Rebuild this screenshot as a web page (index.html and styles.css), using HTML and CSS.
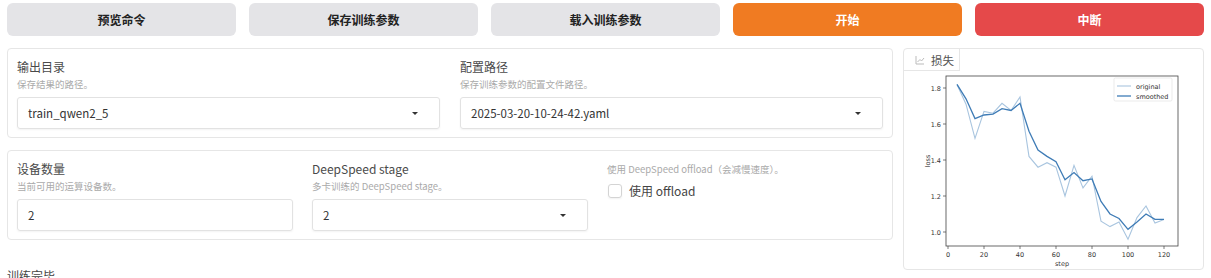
FILE: index.html
```html
<!DOCTYPE html>
<html lang="zh">
<head>
    <meta charset="UTF-8">
    <title>训练</title>
    <link rel="stylesheet" href="styles.css">
</head>
<body>
<div class="btn-row">
    <button class="btn">预览命令</button>
    <button class="btn">保存训练参数</button>
    <button class="btn">载入训练参数</button>
    <button class="btn btn-start">开始</button>
    <button class="btn btn-stop">中断</button>
</div>
<div class="main-row">
    <div class="left-col">
        <div class="panel cols-2">
            <div class="field">
                <div class="label">输出目录</div>
                <div class="desc">保存结果的路径。</div>
                <div class="input select">train_qwen2_5<span class="caret"></span></div>
            </div>
            <div class="field">
                <div class="label">配置路径</div>
                <div class="desc">保存训练参数的配置文件路径。</div>
                <div class="input select">2025-03-20-10-24-42.yaml<span class="caret"></span></div>
            </div>
        </div>
        <div class="panel cols-3">
            <div class="field">
                <div class="label">设备数量</div>
                <div class="desc">当前可用的运算设备数。</div>
                <div class="input">2</div>
            </div>
            <div class="field">
                <div class="label">DeepSpeed stage</div>
                <div class="desc">多卡训练的 DeepSpeed stage。</div>
                <div class="input select">2<span class="caret"></span></div>
            </div>
            <div class="field">
                <div class="desc desc-top">使用 DeepSpeed offload（会减慢速度）。</div>
                <label class="check-row"><span class="check-box"></span>使用 offload</label>
            </div>
        </div>
    </div>
    <div class="chart-panel">
        <div class="chart-tab">
            <svg class="tab-icon" width="10" height="10" viewBox="0 0 10 10">
                <path d="M1 1 V9 H9" fill="none" stroke="#bbb" stroke-width="1"/>
                <path d="M2.5 7 L5 4.5 L6.5 6 L9 3" fill="none" stroke="#bbb" stroke-width="1"/>
            </svg>
            损失
        </div>
        <svg class="chart" width="299" height="198" viewBox="0 0 299 198">
            <rect x="42" y="5" width="232" height="170" fill="#fff" stroke="#444" stroke-width="0.8"/>
            <g stroke="#444" stroke-width="0.7">
                <line x1="39" y1="161" x2="42" y2="161"/>
                <line x1="39" y1="125" x2="42" y2="125"/>
                <line x1="39" y1="89" x2="42" y2="89"/>
                <line x1="39" y1="53" x2="42" y2="53"/>
                <line x1="39" y1="17" x2="42" y2="17"/>
                <line x1="44" y1="175" x2="44" y2="178"/>
                <line x1="80" y1="175" x2="80" y2="178"/>
                <line x1="116" y1="175" x2="116" y2="178"/>
                <line x1="152" y1="175" x2="152" y2="178"/>
                <line x1="188" y1="175" x2="188" y2="178"/>
                <line x1="224" y1="175" x2="224" y2="178"/>
                <line x1="260" y1="175" x2="260" y2="178"/>
            </g>
            <g class="tick" text-anchor="end">
                <text x="37" y="163.5">1.0</text>
                <text x="37" y="127.5">1.2</text>
                <text x="37" y="91.5">1.4</text>
                <text x="37" y="55.5">1.6</text>
                <text x="37" y="19.5">1.8</text>
            </g>
            <g class="tick" text-anchor="middle">
                <text x="44" y="186">0</text>
                <text x="80" y="186">20</text>
                <text x="116" y="186">40</text>
                <text x="152" y="186">60</text>
                <text x="188" y="186">80</text>
                <text x="224" y="186">100</text>
                <text x="260" y="186">120</text>
                <text x="158" y="195">step</text>
                <text x="0" y="0" transform="translate(26 90) rotate(-90)">loss</text>
            </g>
            <polyline fill="none" stroke="#a9c5df" stroke-width="1.1" points="53,13.4 62,33.2 71,67.4 80,40.4 89,42.2 98,32.3 107,39.5 116,26 125,85.4 134,96.2 143,91.7 152,96.2 161,125 170,94.4 179,116.9 188,105.2 197,150.2 206,155.6 215,151.1 224,168.2 233,146.6 242,134.9 251,152 260,148.4"/>
            <polyline fill="none" stroke="#3f7cb6" stroke-width="1.3" points="53,13.4 62,27.8 71,47.6 80,44 89,43.1 98,37.7 107,39.5 116,32.3 125,60.2 134,79.1 143,85.4 152,90.8 161,108.8 170,101.6 179,109.7 188,107.9 197,130.4 206,143 215,147.5 224,158.3 233,151.1 242,143 251,148.4 260,148.4"/>
            <rect x="210" y="7" width="58" height="23" fill="#fff" fill-opacity="0.85" stroke="#ddd" stroke-width="0.6" rx="1.5"/>
            <line x1="213" y1="15" x2="227" y2="15" stroke="#a9c5df" stroke-width="1.1"/>
            <line x1="213" y1="25" x2="227" y2="25" stroke="#3f7cb6" stroke-width="1.3"/>
            <g class="tick">
                <text x="232" y="17.5">original</text>
                <text x="232" y="27.5">smoothed</text>
            </g>
        </svg>
    </div>
</div>
<div class="done-text">训练完毕</div>
</body>
</html>
```

FILE: styles.css
```css
body {
    margin: 0;
    padding: 3px 7px 0 7px;
    background-color: #fff;
    font-family: "Noto Sans CJK SC", "Noto Sans", sans-serif;
    color: #333;
}

.btn-row {
    display: flex;
    gap: 13px;
}

.btn {
    flex: 1;
    height: 33px;
    border: none;
    border-radius: 6px;
    background-color: #e4e4e7;
    font-family: "Noto Sans CJK SC", sans-serif;
    font-size: 12px;
    font-weight: bold;
    color: #222;
    padding: 0;
}

.btn-start {
    background-color: #f07b22;
    color: #fff;
}

.btn-stop {
    background-color: #e5494a;
    color: #fff;
}

.main-row {
    display: flex;
    gap: 10px;
    margin-top: 12px;
}

.left-col {
    flex: 1;
    display: flex;
    flex-direction: column;
    gap: 12px;
}

.panel {
    border: 1px solid #e6e6e6;
    border-radius: 4px;
    padding: 9px 9px 8px 9px;
    display: grid;
    column-gap: 20px;
}

.cols-2 {
    grid-template-columns: 1fr 1fr;
}

.cols-3 {
    grid-template-columns: 1fr 1fr 1fr;
    column-gap: 19px;
}

.label {
    font-size: 12px;
    line-height: 18px;
    color: #4a4a4a;
}

.desc {
    font-size: 9.5px;
    line-height: 16px;
    color: #aaa;
    margin-bottom: 5px;
}

.desc-top {
    line-height: 18px;
    margin-bottom: 4px;
}

.input {
    height: 32px;
    box-sizing: border-box;
    border: 1px solid #e2e2e2;
    border-radius: 3px;
    box-shadow: 0 1px 2px rgba(0, 0, 0, 0.05);
    padding: 0 10px;
    font-size: 11.5px;
    line-height: 30px;
    color: #333;
    position: relative;
}

.select {
    padding-right: 30px;
}

.caret {
    position: absolute;
    right: 21px;
    top: 14px;
    width: 0;
    height: 0;
    border-left: 3px solid transparent;
    border-right: 3px solid transparent;
    border-top: 3px solid #333;
}

.check-row {
    display: flex;
    align-items: center;
    font-size: 12px;
    color: #444;
    line-height: 18px;
}

.check-box {
    width: 12px;
    height: 12px;
    border: 1px solid #d4d4d4;
    border-radius: 3px;
    box-shadow: 0 1px 2px rgba(0, 0, 0, 0.06);
    margin: 0 7px 0 1px;
}

.chart-panel {
    width: 299px;
    height: 220px;
    border: 1px solid #e6e6e6;
    border-radius: 4px;
}

.chart-tab {
    display: flex;
    width: fit-content;
    align-items: center;
    gap: 6px;
    height: 21px;
    padding: 0 5px 0 11px;
    border-right: 1px solid #e6e6e6;
    border-bottom: 1px solid #e6e6e6;
    font-size: 11.5px;
    color: #555;
}

.chart {
    display: block;
}

.tick {
    font-family: "DejaVu Sans", sans-serif;
    font-size: 6.5px;
    fill: #333;
}

.done-text {
    margin-top: -2px;
    font-size: 12px;
    line-height: 16px;
    color: #444;
}
```
